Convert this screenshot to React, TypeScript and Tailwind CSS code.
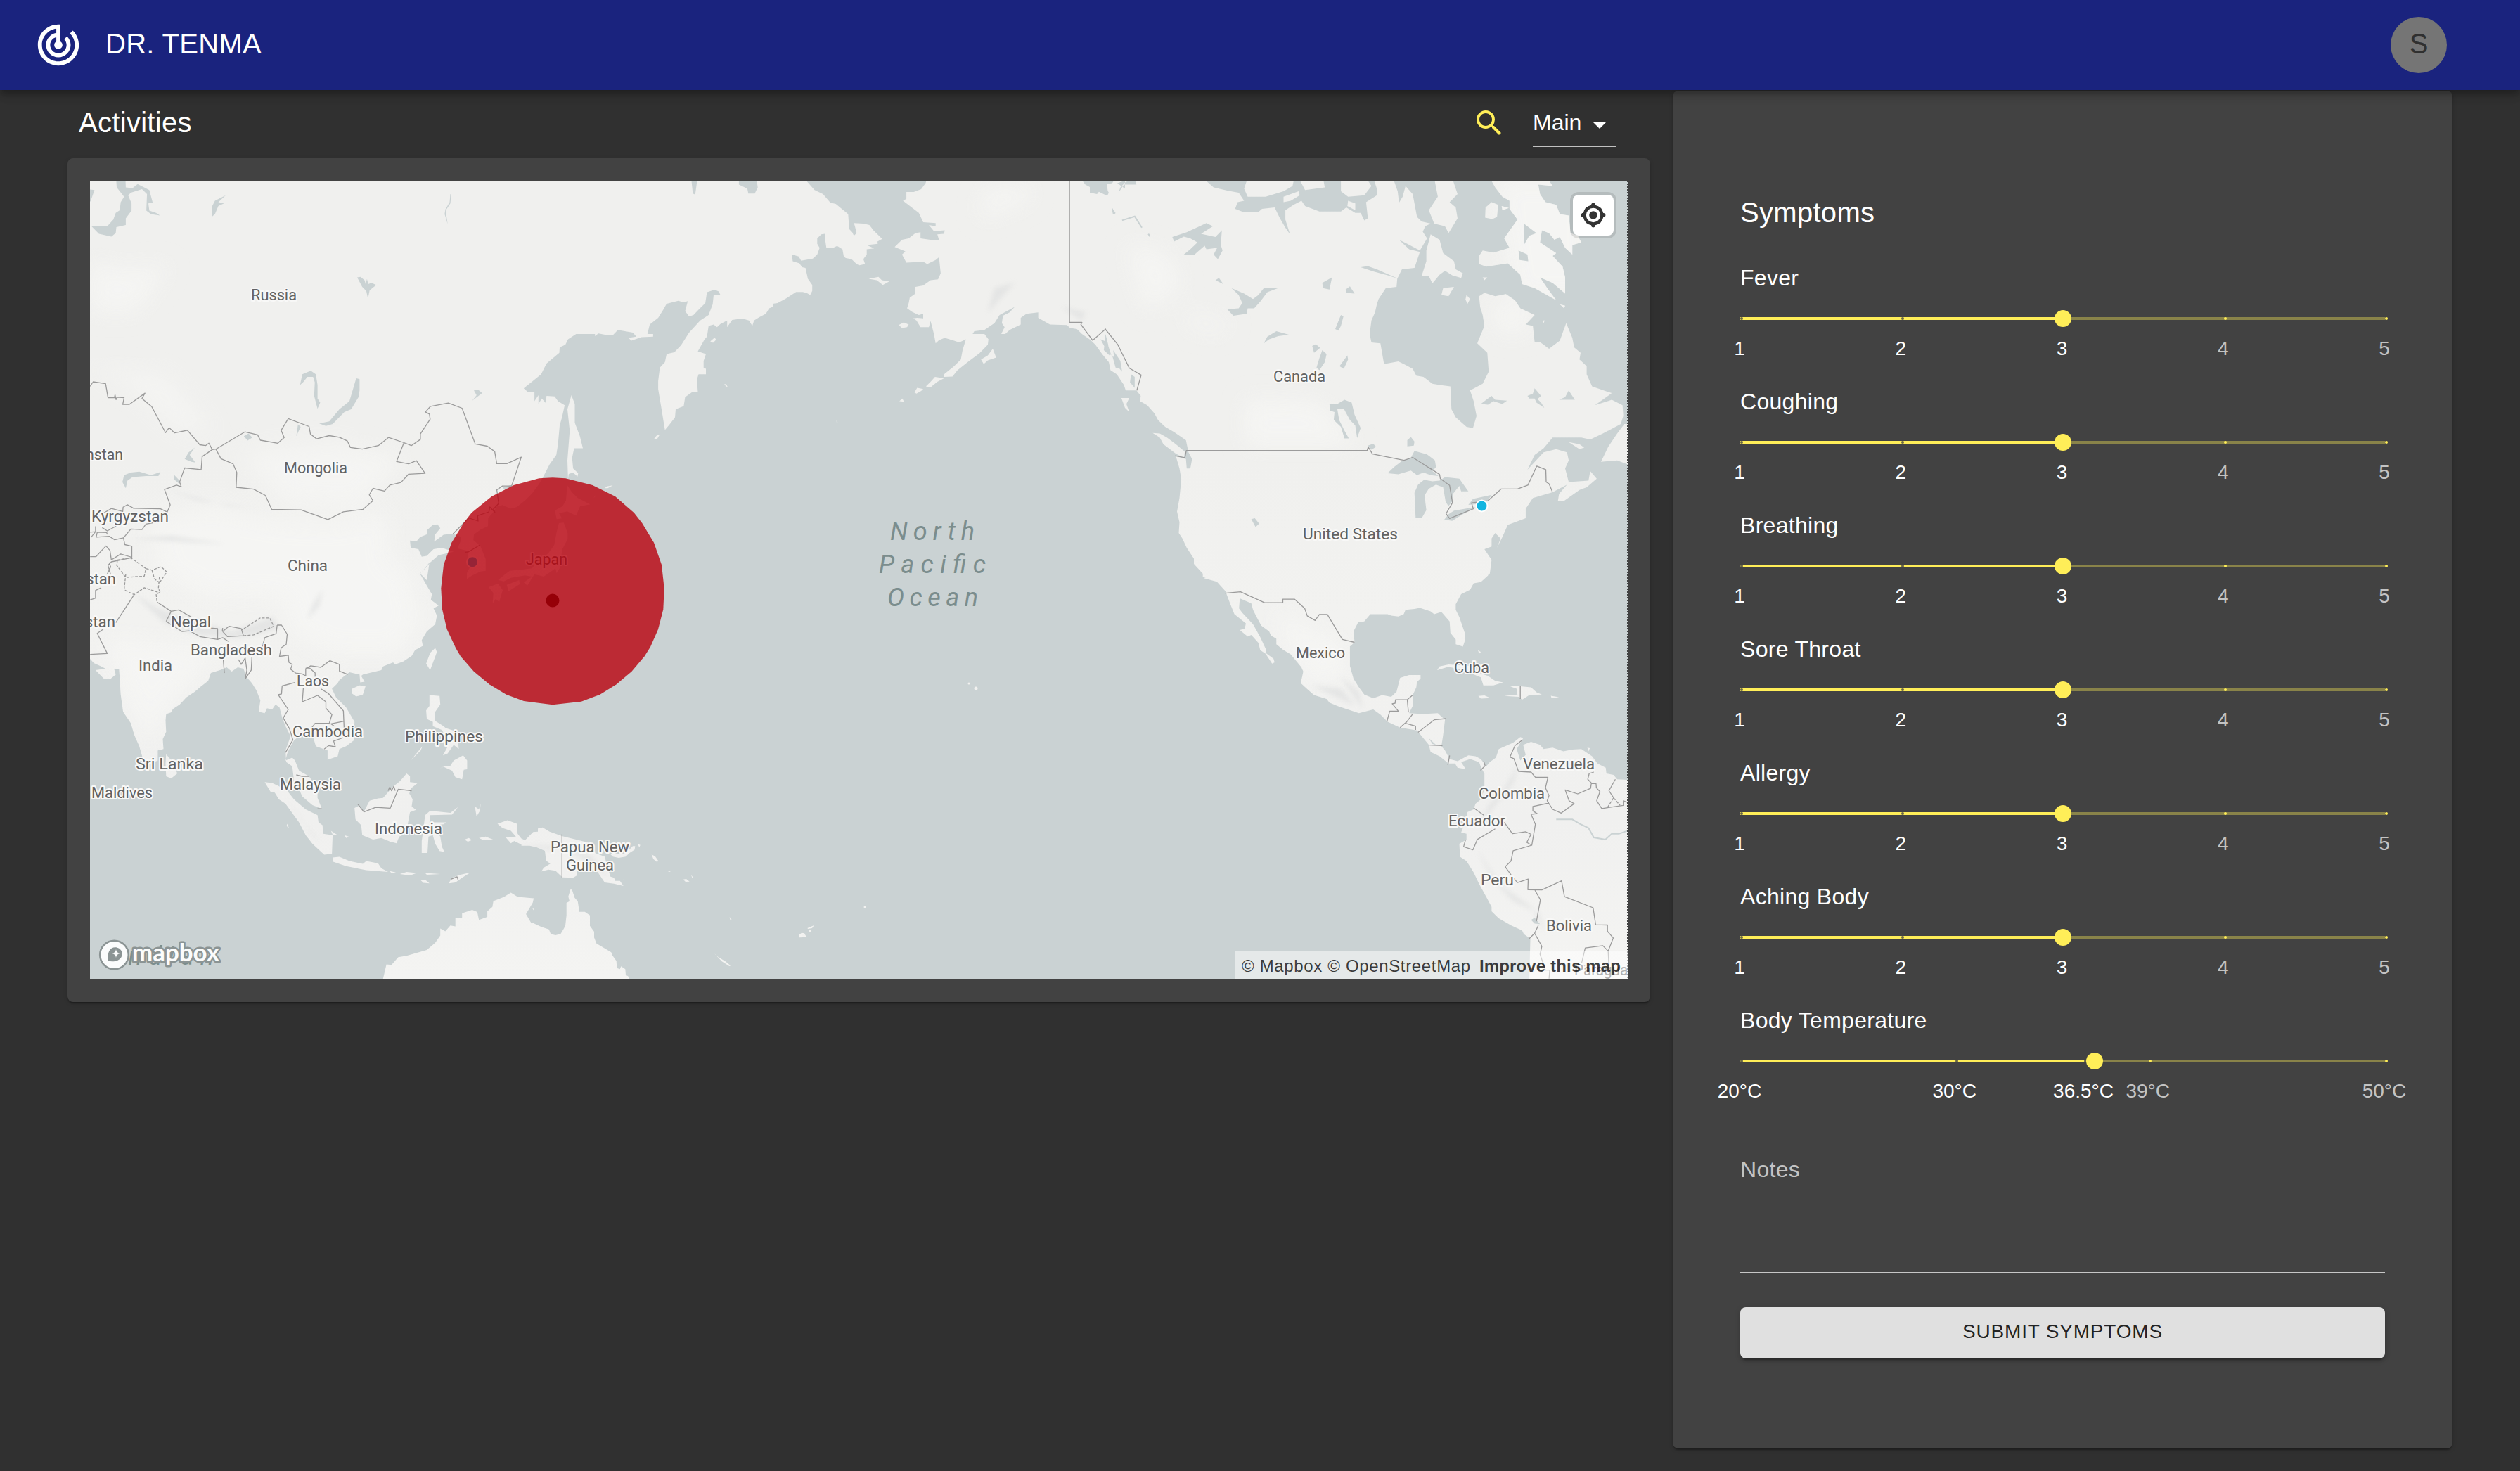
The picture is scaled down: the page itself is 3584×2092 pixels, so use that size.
import React from "react";
import { MdArrowDropDown, MdSearch, MdTrackChanges } from "react-icons/md";

/* ---------- Map data ----------
 * Coordinates are stored per sheet (origin x, origin y, scale x, scale y).
 * A letter switches the sheet, a slash starts a new ring.
 */
const SHEETS: Record<string, [number, number, number, number]> = {
  A: [100, 230, 0.47832, 0.38265],
  B: [850, 230, 0.47832, 0.38265],
  C: [1550, 230, 0.5102, 0.38265],
  D: [100, 800, 0.47832, 0.40816],
  E: [1550, 800, 0.5102, 0.40816],
  F: [600, 640, 0.33333, 0.33333],
  G: [740, 1120, 0.33333, 0.33333],
};

function toPath(source: string, close = true): string {
  let sheet = SHEETS.A;
  let out = "";
  let start = true;
  for (const token of source.trim().split(/\s+/)) {
    if (token === "/") {
      if (close) out += "Z";
      start = true;
    } else if (SHEETS[token]) {
      sheet = SHEETS[token];
    } else {
      const [x, y] = token.split(",").map(Number);
      const px = (sheet[0] + x * sheet[2]).toFixed(1);
      const py = (sheet[1] + y * sheet[3]).toFixed(1);
      out += (start ? "M" : "L") + px + " " + py;
      start = false;
    }
  }
  return close ? out + "Z" : out;
}

const EURASIA = `A 50,60 B 615,60 620,70 645,105 670,120 692,152 708,157 745,195 748,250 757,262 762,275 770,265 765,240 762,228 790,230 808,235 820,255 846,287 832,297 833,305 800,310 822,322 800,325 800,345 790,362 795,380 778,385 770,380 755,362 738,358 732,353 728,325 712,313 700,320 680,320 676,285 676,268 665,270 653,285 653,305 660,320 653,345 640,360 605,368 598,352 578,345 580,370 600,378 608,392 618,395 625,435 638,458 638,480 632,495 622,488 610,484 590,484 560,508 535,525 523,527 520,540 510,545 500,565 480,578 465,590 460,610 450,590 430,583 400,588 385,615 385,590 365,603 355,615 345,605 330,610 325,650 318,660 298,705 322,715 315,740 315,765 322,770 322,790 300,790 295,810 298,855 280,857 260,875 256,908 232,920 230,950 215,975 200,997 190,920 180,845 180,815 185,765 200,745 205,715 228,708 248,682 272,635 305,590 330,570 342,530 345,495 365,495 360,482 348,476 325,485 320,525 300,550 285,570 272,575 260,555 268,518 255,523 240,517 205,528 195,550 180,580 155,605 148,640 165,640 165,650 130,652 100,665 92,655 115,650 105,635 60,625 45,645 30,645 0,638
 A 1568,640 1560,648 1560,640 1504,640 1480,660 1472,680 1455,690 1454,710 1416,750 1400,790 1375,815 1348,842 1360,855 1380,857 1380,890 1392,868 1392,900 1402,880 1414,897 1416,870 1440,872 1450,890 1470,905 1462,950 1455,980 1450,1050 1445,1090 1425,1125 1404,1176
 F 515,118 500,145 470,185 440,215 405,243 380,250 355,240 345,235 320,240 305,265 283,290 282,325 250,340 222,360 220,385 250,410 262,440 272,465 272,515 250,518 215,535 192,550 192,525 205,500 197,460 195,430 152,420 165,390 165,370 133,358
 A 1140,1382 1110,1386 1082,1412 1085,1385 1100,1362 1092,1348 1078,1350 1060,1370 1060,1385 1040,1395 1030,1410 1010,1408 1012,1435 1035,1440 1045,1468 1060,1465 1080,1440 1105,1435 1140,1450 1095,1462 1070,1490 1060,1505 1040,1530 1060,1555
 D 1068,0 1040,40 1060,80 1075,110 1072,130 1095,150 1080,160 1090,185 1085,215 1060,240 1045,270 1048,290 1025,305 1015,325 990,345 965,355 960,348 930,362 925,375 870,390 865,395 875,415 862,418 860,390 830,382 810,400 800,410 795,420 778,440 790,470 820,505 845,555 843,620 820,640 800,650 795,675 765,687 765,655 730,640 720,600 715,590 690,595 665,620 655,640 645,665 640,690 660,680 668,690 680,725 710,745 735,790 735,820 748,858 720,845 690,815 680,790 665,760 660,710 642,695 640,655 655,605 640,570 630,540 622,505 610,495 600,512 585,508 578,525 560,520 565,480 553,445 540,420 525,400 515,370 498,365 480,380 465,365 445,375 418,385 410,412 385,435 370,450 345,470 325,495 305,510 300,522 285,528 283,550 285,590 275,615 277,650 260,655 260,690 240,700 215,680 205,640 190,600 180,560 157,520 150,460 145,370 130,370 135,390 120,405 100,405 75,375 105,370 92,362 70,350 62,340 50,325`;

const ISLANDS_WEST = `A 1490,868 1500,900 1500,970 1515,1020 1524,1065 1498,1065 1492,1100 1495,1140 1510,1158 1508,1170 1495,1155 1482,1160 1480,1180 1478,1110 1485,1000 1478,920 /
 F 620,150 640,180 665,205 718,232 675,240 658,280 620,262 585,270 598,292 575,295 568,258 600,240 615,215 /
 F 585,312 605,310 622,355 622,380 598,425 590,500 575,525 570,505 520,540 500,535 480,530 450,578 435,565 470,540 440,535 380,545 350,560 325,555 355,530 375,515 430,510 470,505 490,480 540,440 565,405 575,350 /
 F 362,575 415,555 418,572 370,602 / F 285,585 325,570 345,598 330,648 315,635 302,655 305,610 / F 732,205 742,193 738,200 / F 780,162 812,152 795,160 /
 D 578,765 600,768 618,778 645,795 665,825 700,860 735,880 738,905 750,915 752,945 780,950 778,1015 755,1018 720,980 700,950 680,905 655,865 640,840 620,825 608,802 595,798 / D 780,1028 800,1025 830,1040 870,1050 880,1040 915,1048 925,1065 945,1078 880,1072 820,1058 780,1042 /
 D 950,1075 968,1080 955,1083 / D 980,1085 1000,1078 1030,1082 1010,1090 / D 1055,1082 1100,1085 1060,1088 / D 1125,1118 1135,1098 1160,1088 1190,1080 1165,1098 1145,1115 / D 1040,1105 1055,1105 1068,1118 1050,1116 /
 D 845,855 858,848 873,868 890,830 915,822 930,820 960,780 980,762 1000,735 1010,745 1010,765 1033,768 1012,788 1008,805 1018,825 1015,850 1028,862 1010,870 1002,920 998,945 978,955 970,978 950,972 925,960 900,965 868,950 865,915 848,895 /
 D 1055,880 1070,865 1130,872 1153,852 1135,878 1070,880 1068,905 1118,905 1110,912 1085,915 1085,930 1100,955 1105,990 1112,1008 1098,1005 1085,980 1078,950 1065,955 1062,1012 1045,1012 1045,970 1050,930 /
 D 1203,850 1215,860 1220,840 1218,865 1208,885 / D 1215,960 1235,955 1262,968 1225,965 / D 1172,965 1185,960 1194,967 1182,973 /
 D 838,440 860,428 878,430 870,460 850,467 836,455 / D 1085,298 1090,312 1070,375 1058,352 1070,315 / D 775,935 795,950 780,948 / D 815,950 828,955 820,960 / D 645,910 650,925 643,918 / D 618,855 628,868 /
 D 1068,462 1098,465 1100,495 1085,520 1085,552 1110,570 1130,592 1108,585 1078,570 1078,555 1060,545 1058,515 1068,500 / D 1100,570 1150,590 1155,650 1140,635 1122,665 1108,672 1125,635 1118,615 / D 1012,690 1047,640 1042,655 /
 D 1098,718 1115,708 1130,708 1140,690 1168,672 1180,690 1180,720 1170,722 1165,755 1145,748 1135,725 1110,712 / D 285,668 305,695 318,735 300,752 285,745 283,700 /
 D 1270,910 1300,898 1328,910 1330,945 1350,975 1345,985 1320,970 1310,978 1295,958 1325,955 1310,935 1285,925 /
 G 0,215 20,225 55,190 75,188 75,175 95,170 125,188 180,208 290,235 320,280 360,295 375,350 385,380 400,385 405,398 425,398 440,420 400,410 360,405 330,360 280,335 240,350 242,375 225,385 180,383 150,355 120,350 90,358 100,342 128,325 110,312 105,270 70,255 40,248 5,248 / G 385,285 440,285 465,265 480,250 490,250 488,265 465,280 450,295 420,300 395,295 / G 500,240 512,245 508,255 / G 440,392 446,393 443,397 / G 33,150 44,158 /
 G 560,286 575,293 590,315 580,316 568,305 / G 630,358 636,353 641,360 / G 695,392 708,390 722,401 705,402 / G 673,346 689,355 / G 729,373 738,385 733,384 / G 748,417 755,422 / G 828,708 845,724 875,742 897,760 892,762 860,742 / G 1188,630 1200,620 1212,622 1221,638 1190,640 / G 1225,600 1253,588 1245,600 1228,603 / G 893,552 902,565 896,566 / G 1466,507 1473,507 1473,513 1466,513 / G 52,516 60,518 58,525 /
 D 928,1460 940,1400 955,1402 975,1375 1000,1370 1060,1350 1085,1325 1100,1300 1100,1275 1115,1285 1130,1265 1145,1268 1145,1240 1165,1240 1165,1222 1195,1210 1210,1218 1215,1245 1240,1235 1240,1215 1255,1200 1258,1180 1290,1165 1310,1150 1330,1165 1378,1170 1375,1185 1355,1225 1370,1255
 G 55,578 90,595 122,605 130,625 150,630 172,625 182,608 192,590 197,545 197,492 210,485 205,465 215,432 222,440 232,470 245,485 252,530 275,530 297,545 297,590 315,615 315,640 325,665 388,703 392,715 410,740 412,770 425,775 430,763 448,775 450,800 460,805 472,830`;

const AMERICAS = `B 980,60 975,80 962,102 940,112 918,112 918,138 908,145 955,190 968,225 1005,228 1005,240 985,235 1000,258 1032,255 1030,268 1010,270 1015,290 1000,292 960,285 960,262 945,265 925,285 905,290 883,317 915,333 905,345 918,375 968,372 980,380 1005,365 1015,355 1020,415 1012,437 990,440 968,460 945,465 945,490 928,505 925,525 920,545 935,558 955,570 968,565 968,582 950,580 938,582 948,590 960,615 985,615 990,592 1000,640 1005,675 1015,663 1032,655 1060,665 1075,672 1095,660 1085,700 1080,735 1060,760 1030,790 1030,800 1055,798 1070,775 1100,745 1135,712 1160,680 1162,660 1150,640 1115,640 1120,630 1150,625 1180,600 1195,570 1240,540 1225,560 1205,572 1202,600 1210,615 1200,640 1212,640 1225,625 1258,605 1258,580 1275,565 1310,560 1310,580 1345,605 1395,607 1405,618 1425,622 1440,640 1465,662 1480,680 1500,715 1520,745 1525,775
 C 75,790 95,830 100,850 130,850 142,870 140,890 160,905 180,935 190,960 210,985 235,1005 268,1035 275,1080 285,1105 280,1140 270,1140 268,1105 240,1095 250,1140 255,1180 250,1250 243,1300 250,1340 248,1380 258,1400 270,1435 290,1475 290,1495 318,1535 318,1548 352,1560
 E 290,0 315,35 315,50 355,68 378,100 390,140 403,180 435,212 432,230 418,235 440,258 450,252 470,280 475,305 490,318 508,352 515,348 512,335 490,315 490,300 475,260 455,215 425,175 416,160 418,125 450,142 455,165 465,190 478,220 500,240 505,255 520,265 520,285 540,305 560,320 590,365 595,380 588,420 605,440 625,462 660,475 668,488 690,500 750,525 790,512 810,530 830,555 865,575 912,585 945,635 950,660 975,675 1000,700 1018,700 1025,715 1048,720 1035,695 1060,685 1085,695 1092,718 1100,735 1100,790 1090,825 1075,840 1070,860 1052,870 1050,895 1035,940 1050,945 1050,965 1030,980 1032,1025 1050,1040 1070,1080 1085,1120 1105,1165 1120,1200 1120,1215 1140,1240 1175,1265 1205,1282 1210,1295 1228,1310 1225,1460 1510,1460 1510,758 1470,755 1460,740 1440,735 1438,715 1415,700 1400,675 1370,650 1345,652 1320,658 1290,645 1265,650 1255,635 1230,625 1208,635 1215,670 1200,690 1190,650 1208,612 1200,608 1180,628 1140,650 1132,680 1115,695 1105,710 1090,685 1075,675 1055,672 1025,692 1003,685 990,655 980,640 985,600 990,548 970,525 930,528 890,525 900,500 900,462 910,435 912,415 922,405 922,392 890,392 865,402 860,425 855,450 840,468 815,462 790,473 765,460 750,435 735,405 725,360 725,292 738,278 735,240 748,208 765,205 782,180 830,180 840,185 860,188 875,180 880,165 905,162 920,158 950,170 960,180 980,172 1003,205 1005,245 1020,268 1020,285 1040,293 1046,270 1045,245 1030,190 1020,165 1020,145 1035,110 1060,95 1070,72 1090,68 1110,45 1118,0
 C 1090,1560 1115,1530 1120,1480 1100,1440 1120,1430 1120,1400 1130,1380 1145,1400 1135,1435 1150,1395 1165,1350 1215,1325 1215,1290 1235,1250 1290,1228 1330,1200 1308,1235 1305,1260 1320,1262 1365,1220 1385,1210 1413,1178 1395,1150 1390,1185 1335,1190 1325,1140 1335,1110 1330,1080 1300,1068 1265,1080 1220,1145 1240,1090 1265,1065 1290,1025 1370,1025 1395,1032 1430,1010 1480,975 1487,945 1485,905 1455,885 1408,905 1455,860 1400,835 1385,790 1385,760 1365,735 1368,710 1350,690 1345,655 1328,600 1310,665 1280,695 1255,670 1240,670 1235,610 1215,605 1240,570 1200,545 1185,515 1160,492 1130,500 1100,487 1085,500 1088,540 1095,570 1100,610 1080,675 1108,710 1112,780 1095,825 1060,850 1070,890 1078,945 1068,990 1050,985 1020,950 1008,920 1005,835 975,830 955,825 930,800 910,795 900,770 880,755 860,742 820,752 810,675 785,672 780,640 785,590 795,560 800,530 805,510 825,470 855,465 857,435 870,400 905,395 920,335 890,325 862,290 885,305 920,330 940,285 928,260 935,240 950,230 925,222 912,205 900,120 880,90 872,130 862,152 858,110 845,60 790,60 800,100 800,125 770,150 775,210 765,218 755,190 740,190 715,170 700,185 640,185 600,165 590,145 568,160 545,180 545,215 558,270 545,245 530,210 515,170 480,175 470,187 430,188 405,175 412,150 430,145 415,115 385,108 345,95 315,60 /
 C 960,60 970,130 945,180 960,230 990,240 1000,265 1025,210 1020,170 1003,150 1025,120 1010,60 / C 950,270 975,290 985,340 1015,370 1020,400 1040,415 1035,432 1010,422 990,405 975,420 955,452 945,425 925,425 938,370 938,330 /
 C 1115,60 1130,95 1150,130 1170,145 1170,175 1192,215 1155,285 1170,320 1125,338 1095,330 1085,350 1085,380 1105,390 1165,378 1200,420 1205,455 1240,470 1300,515 1275,470 1255,430 1290,450 1325,490 1325,430 1318,390 1290,350 1300,340 1255,300 1260,255 1280,265 1295,290 1310,280 1325,320 1345,345 1345,310 1370,300 1360,275 1340,265 1335,200 1310,195 1300,160 1270,150 1255,120 1250,85 1290,90 1275,60 /
 C 1120,150 1138,160 1135,205 1122,213 1102,208 1103,170 / C 1148,165 1168,172 1150,180 / C 985,470 1015,465 1000,500 980,495 / C 1050,495 1060,510 1053,528 1047,512 /
 C 440,60 430,100 440,130 490,130 540,110 565,90 570,60 / C 582,60 590,80 600,105 655,95 650,60 / C 700,60 700,110 720,130 765,125 785,90 770,60 / C 540,130 582,110 585,125 560,145 540,150 / C 720,145 740,155 740,180 718,165 /
 C 1490,975 1470,1010 1445,1060 1425,1115 1470,1110 1500,1125 1500,975 / C 1335,1042 1365,1050 1378,1062 1365,1068 / C 1310,530 1325,535 1322,545 / C 1262,590 1268,590 1265,600 / C 1095,430 1108,430 1100,440 /
 E 968,375 975,362 1000,355 1060,360 1085,385 1110,395 1130,412 1152,418 1125,428 1097,428 1090,400 1040,375 1000,363 / E 1172,432 1190,430 1230,435 1245,452 1260,460 1225,462 1205,478 1195,468 1155,465 1192,460 1190,440 / E 1083,465 1100,463 1117,472 1090,474 / E 1285,464 1308,469 1287,472 / E 1082,305 1090,312 1085,318 / E 842,886 850,908 / E 1387,645 1394,647 1390,658 /
 C 175,1008 195,1010 215,1025 240,1050 265,1078 262,1100 240,1085 205,1050 195,1025 / C 88,878 110,878 102,900 110,930 98,915 / B 1140,735 1160,720 1175,695 1185,728 1160,738 1148,752 / B 806,435 835,428 845,440 867,445 848,458 830,440 / B 895,607 910,597 925,605 920,615 905,618 / B 942,858 950,840 968,845 962,852 948,862 / B 976,835 990,818 1003,800 1030,805 1010,818 990,838 / B 897,890 906,880 911,892 / B 866,917 874,905 / B 870,910 894,905 / B 168,1028 176,1017 184,1015 176,1032 / B 20,1213 30,1206 45,1203 30,1213 / B 335,668 348,653 352,662 343,673 / B 376,828 382,826 388,841 / B 503,923 515,927 / B 685,968 691,970 / B 710,962 714,970 711,972`;

const WATER = `A 136,60 164,60 165,95 185,98 200,83 235,105 245,152 232,155 235,182 255,190 267,200 240,195 226,182 228,120 213,102 180,115 172,125 182,155 182,182 165,210 165,235 137,243 135,265 122,278 85,268 63,240 110,240 128,215 135,190 147,180 150,150 160,130 138,95 / A 50,102 72,105 60,148 50,148 / A 462,125 440,150 457,155 440,165 430,195 422,203 422,165 430,145 /
 A 1130,120 1133,121 1130,155 1116,182 1122,232 1113,195 1115,178 1128,150 / A 853,430 863,428 875,440 878,455 882,436 886,455 895,450 910,458 898,470 890,478 885,508 880,480 868,465 / A 683,830 690,790 715,777 730,790 735,830 735,880 743,895 735,918 725,870 727,820 722,800 705,800 692,820 /
 A 850,805 860,808 860,850 857,875 835,920 815,930 780,975 760,982 740,973 770,965 800,920 830,890 / A 1200,850 1212,847 1225,860 1195,888 1208,868 / A 677,976 685,985 672,1020 / A 516,1020 530,1010 541,1025 527,1036 /
 A 155,1190 160,1165 180,1155 205,1152 240,1165 268,1153 262,1168 225,1168 185,1172 170,1185 165,1213 / A 340,1105 352,1080 370,1062 355,1090 372,1118 360,1115 / A 308,1163 325,1185 325,1198 308,1180 /
 B 278,60 297,60 290,122 283,118 / B 420,60 420,85 445,100 448,118 467,118 476,95 472,60 / B 1435,60 1450,85 1480,105 1515,127 1520,115 1505,85 1530,80 1540,60 / B 1545,80 1568,70 1568,100 / C 0,60 0,115 20,120 35,95 50,110 48,85 70,60 / C 80,115 95,85 130,85 125,65 100,75 85,95 / B 1528,170 1540,190 1532,195 / B 1555,770 1540,765 1530,720 1545,740 / B 1510,640 1518,680 1522,720 1505,700 / C 115,790 125,800 125,840 112,820 / C 30,660 48,670 60,720 48,705 / C 65,700 85,740 90,780 70,750 /
 C 230,280 270,262 325,228 343,240 310,268 350,280 368,255 365,310 370,330 357,362 345,345 355,320 325,325 320,312 300,335 292,345 262,345 280,325 300,300 280,285 262,278 235,297 / C 395,470 430,490 455,510 470,495 485,470 525,470 495,485 475,520 458,545 440,545 437,565 400,572 383,548 415,545 425,525 415,495 /
 C 485,675 495,650 520,630 555,643 525,648 500,660 / C 648,700 660,715 655,745 640,775 632,765 640,730 / C 620,685 630,678 642,692 625,710 / C 648,450 675,430 668,475 650,470 / C 713,475 725,463 738,490 715,487 / C 700,570 707,575 700,610 693,628 684,622 692,595 / C 718,720 720,735 708,770 696,760 / C 62,170 72,195 65,195 / C 350,440 360,432 372,455 /
 C 668,900 690,900 710,885 730,895 738,940 755,990 745,1027 740,980 725,960 708,918 690,920 695,960 710,1000 722,1028 710,1028 700,985 680,960 682,930 670,925 / C 885,1035 895,1023 905,1040 903,1055 885,1058 / C 775,1055 790,1048 798,1060 785,1070 / C 830,1158 848,1135 870,1112 895,1100 905,1075 940,1088 962,1110 965,1135 955,1150 972,1168 950,1165 930,1155 912,1165 895,1148 860,1162 / C 905,1230 915,1200 932,1182 955,1188 975,1185 990,1172 1030,1178 1055,1225 1035,1225 1030,1205 1012,1235 1010,1262 1000,1280 992,1265 985,1210 965,1200 945,1215 933,1240 938,1295 925,1325 908,1322 / C 988,1330 1000,1310 1015,1297 1075,1283 1040,1310 1010,1335 / C 1055,1275 1068,1253 1120,1238 1108,1262 1080,1272 / C 450,1328 460,1325 472,1345 462,1358 /
 C 1090,900 1105,885 1120,870 1130,885 1163,888 1150,900 1125,890 1110,903 / C 1220,870 1235,862 1240,842 1258,870 1248,882 1258,895 1267,915 1245,895 1240,880 1225,880 / C 1308,885 1325,875 1335,850 1352,885 / C 755,392 775,388 800,400 860,435 830,422 790,408 / C 965,230 985,262 975,270 955,255 / C 1210,230 1245,265 1225,275 1210,310 / C 1195,330 1220,345 1222,370 1198,365 /
 E 1230,1245 1240,1238 1255,1260 1240,1258 / E 945,612 965,635 955,632 / F 345,160 380,150 385,158 355,170`;

const RIVERS = `E 1300,895 1345,895 1365,910 1390,925 1405,958 1437,965 1455,945 1475,945 1498,935 / C 90,218 125,203 145,245 / C 163,268 168,278`;

const BORDERS = `A 59,835 68,818 105,825 112,877 131,877 133,866 136,884 139,875 160,877 156,902 175,902 222,860 213,880 242,910 283,1007 294,988 310,1008 348,998 385,1052 402,1055 412,1046 422,1070 433,1068 519,1004 557,1015 565,1035 617,1046 636,1025 627,998 648,955 710,984 714,1012 732,1030 770,1018 800,1024 824,1038 833,1062 868,1068 916,1055 946,1025 992,1044 1014,1055 1041,1032 1041,1012 1070,957 1068,938 1056,930 1071,909 1124,897 1165,916 1204,1049 1240,1057 1262,1077 1268,1122 1298,1122 1341,1098 1312,1205 1285,1205 1268,1220 F 320,172 328,228 305,252 312,266 290,243 286,264 238,280 240,303 200,290 133,358 /
 A 433,1068 448,1104 484,1123 495,1155 493,1210 545,1217 580,1240 599,1292 686,1294 766,1330 812,1301 870,1292 900,1260 889,1238 900,1214 934,1224 950,1202 983,1192 1006,1161 1055,1158 1029,1111 1006,1123 970,1114 992,1044 /
 A 422,1070 392,1096 389,1144 340,1138 325,1190 330,1208 316,1202 280,1218 297,1275 288,1302 268,1290 188,1288 170,1275 157,1284 156,1300 122,1289 100,1305 / A 59,1377 75,1375 62,1395 / A 75,1355 75,1375 / A 95,1360 110,1372 140,1352 130,1340 / A 245,1342 225,1347 213,1367 180,1365 158,1398 132,1405 116,1392 77,1395 80,1377 108,1378 110,1385 / A 158,1398 162,1423 183,1429 183,1470 150,1458 122,1480 118,1445 106,1428 76,1468 59,1468 / A 180,1472 122,1487 112,1500 120,1535 / D 115,0 120,15 110,40 / D 92,88 75,97 75,124 59,130 /
 D 190,112 135,210 / D 98,232 80,247 110,317 59,320 / D 258,138 300,170 322,165 360,190 / D 285,205 300,170 / D 285,205 332,240 355,238 385,258 438,268 438,230 415,228 / D 453,240 472,222 508,230 515,255 467,258 453,240 / D 438,268 453,262 470,275 / D 453,228 452,240 / D 615,218 628,218 645,250 642,285 627,297 622,327 648,323 650,348 660,355 655,372 670,385 690,388 / D 615,218 612,248 578,262 570,300 / D 455,340 458,385 / D 500,338 508,355 520,333 525,375 520,405 538,375 540,330 /
 D 668,418 630,430 628,458 618,460 648,512 633,542 652,580 662,618 640,662 / D 693,435 690,485 735,463 760,485 760,508 778,530 770,560 728,560 715,580 / D 745,440 768,457 812,517 814,575 / D 814,553 775,562 785,570 / D 690,388 700,395 700,370 715,360 745,365 772,342 800,355 800,378 825,390 / D 700,368 712,368 728,385 728,398 / D 755,650 768,638 788,642 783,622 812,610 / D 672,740 690,745 710,745 / D 735,858 748,858 / D 855,842 873,869 908,853 951,856 975,790 1015,795 / D 945,795 950,782 955,795 962,780 966,795 / D 1462,947 1462,1097 / D 1133,1103 1150,1095 1153,1105 / F 185,436 198,435 248,405 /
 E 377,107 420,102 487,140 538,140 538,128 571,128 599,160 606,186 628,202 640,181 662,181 704,268 738,278 / E 828,555 836,518 860,518 843,492 851,490 852,478 885,478 888,522 / E 885,478 900,462 / E 900,528 880,560 908,570 908,583 / E 880,558 865,575 / E 915,592 960,548 993,544 / E 947,636 983,638 / E 1003,672 998,705 / E 1098,692 1102,708 1089,724 /
 E 1206,618 1185,638 1171,678 1182,683 1195,728 1230,730 1242,748 1277,748 1270,785 1280,812 1275,830 1290,860 1314,873 1350,840 1336,830 1325,792 1360,806 1396,787 1398,768 1388,755 1392,735 1405,730 / E 1398,770 1411,770 1412,785 1422,798 1413,830 1427,857 1487,846 1487,830 1498,835 / E 1465,755 1447,795 1460,820 / E 1280,838 1235,850 1235,865 1247,875 1230,877 1242,912 1232,985 1218,975 1230,947 1215,938 1178,945 1155,905 / E 1232,985 1180,1004 1174,1040 1158,1060 1178,1095 1192,1115 1222,1103 1221,1140 1260,1141 1315,1109 1323,1164 1403,1203 1410,1262 1443,1263 1443,1285 1459,1308 1445,1354 1430,1335 1381,1343 1370,1400 1430,1440 /
 E 1240,1140 1256,1175 1245,1250 / E 1225,1310 1240,1292 1250,1265 / E 1240,1292 1260,1337 1255,1365 1270,1420 1282,1420 1280,1450 / E 1445,1354 1447,1410 / E 1070,855 1098,880 / E 1130,928 1080,965 1068,1001 1042,990 1047,967 / E 1200,430 1200,475 /
 B 1403,60 1403,597 1440,597 1437,605 1472,664 1510,622 C 43,622 78,680 110,767 143,793 131,850 / C 238,1093 265,1100 269,1073 773,1073 776,1060 788,1086 876,1110 900,1099 975,1162 977,1178 1003,1203 1011,1267 993,1308 1003,1326 1069,1290 1064,1268 1110,1260 1147,1216 1192,1216 1221,1202 1246,1131 1271,1144 1272,1190 1280,1197 1289,1225`;

const DISPUTED = `A 140,1480 180,1472 225,1512 220,1540 165,1545 138,1500 140,1480 / A 225,1512 243,1518 270,1505 287,1525 265,1565 / A 243,1518 250,1550 265,1565 / D 165,40 160,95 190,112 220,88 265,105 255,110 258,138 / D 265,50 262,90 268,105 / D 515,255 545,252 605,222 593,193 565,193 510,235 / E 1460,820 1443,853 / E 1460,820 1478,846`;

const OUTBREAK = `F 558,118 613,121 728,150 825,198 905,268 940,312 990,395 1023,490 1034,590 1030,680 1008,765 975,840 950,880 895,945 830,1000 760,1043 680,1073 558,1087 435,1071 360,1043 288,1000 222,945 165,880 145,845 107,765 87,680 82,590 93,490 127,395 178,312 212,268 298,198 392,150 500,121`;

// Soft relief: lighter lowlands and slightly darker ranges
const RELIEF_LIGHT = `A 59,360 150,400 300,380 200,560 59,560 / A 59,760 280,800 420,1000 330,1000 200,850 / A 220,1330 420,1280 620,1330 780,1340 950,1300 950,1560 300,1560 / A 500,1080 780,1050 1000,1100 860,1280 640,1270 / D 200,0 1000,0 1040,200 980,320 780,320 650,250 640,130 400,120 / D 100,260 440,300 300,500 230,640 170,480 / C 100,300 220,340 260,470 150,560 / C 430,880 640,890 750,1060 430,1060 / C 1120,510 1220,540 1230,640 1130,640 / E 500,160 700,280 720,400 620,430 / B 1150,100 1300,90 1280,150 1130,220 / C 280,560 400,600 360,640 260,610 / C 1130,60 1400,60 1400,520 1180,520`;
const RELIEF_DARK = `A 290,1220 470,1280 560,1290 380,1260 / A 190,1400 300,1390 460,1420 300,1410 / D 190,110 260,160 310,180 480,240 600,190 620,230 500,262 380,252 280,210 / D 750,95 740,150 705,200 720,150 / D 640,820 680,880 720,950 740,970 690,900 / D 1330,985 1440,988 1430,1000 / E 620,430 700,440 740,500 690,470 / E 700,400 750,450 760,510 / E 1195,700 1180,770 1120,860 1090,920 1110,850 1160,780 / E 1080,1000 1120,1100 1180,1180 1250,1220 1270,1290 1230,1200 1140,1120 / B 1180,470 1240,450 1160,560 / B 1380,540 1450,560 1440,590 / G 190,260 300,290 380,390 310,330`;

type Label = [text: string, x: number, y: number, width: number];

const COUNTRIES: Label[] = [
  ["Russia", 357, 427, 65],
  ["Mongolia", 404, 673, 90],
  ["Kazakhstan", 64, 654, 111],
  ["Kyrgyzstan", 130, 742, 110],
  ["China", 409, 812, 57],
  ["Japan", 748, 803, 59],
  ["Tajikistan", 71, 831, 94],
  ["Pakistan", 78, 892, 86],
  ["Nepal", 243, 892, 57],
  ["Bangladesh", 271, 932, 116],
  ["India", 197, 954, 48],
  ["Laos", 422, 976, 46],
  ["Cambodia", 416, 1048, 100],
  ["Philippines", 576, 1055, 111],
  ["Sri Lanka", 193, 1094, 96],
  ["Malaysia", 398, 1123, 87],
  ["Maldives", 130, 1135, 87],
  ["Indonesia", 533, 1186, 96],
  ["Papua New", 783, 1212, 112],
  ["Guinea", 805, 1238, 68],
  ["Canada", 1811, 543, 74],
  ["United States", 1853, 767, 135],
  ["Mexico", 1843, 936, 70],
  ["Cuba", 2068, 957, 50],
  ["Venezuela", 2166, 1094, 102],
  ["Colombia", 2103, 1136, 94],
  ["Ecuador", 2060, 1175, 81],
  ["Peru", 2106, 1259, 47],
  ["Bolivia", 2199, 1324, 65],
  ["Paraguay", 2239, 1387, 86],
];

const OCEANS: Label[] = [
  ["North", 1266, 768, 120],
  ["Pacific", 1250, 815, 152],
  ["Ocean", 1262, 862, 129],
  ["Indian", 164, 1372, 140],
];

function WorldMap() {
  return (
    <div className="relative h-[1136px] w-[2187px] overflow-hidden bg-[#cad2d3]">
      <svg className="block h-full w-full" viewBox="128 257 2187 1136" aria-label="World map">
        <defs>
          <linearGradient id="land" gradientUnits="userSpaceOnUse" x1="0" y1="257" x2="0" y2="1393">
            <stop offset="0" stopColor="#f0f0ee" />
            <stop offset="0.35" stopColor="#f0f0ee" />
            <stop offset="0.55" stopColor="#f2f2f0" />
            <stop offset="0.8" stopColor="#f0f0ef" />
            <stop offset="1" stopColor="#f4f4f2" />
          </linearGradient>
          <filter id="relief" x="-5%" y="-5%" width="110%" height="110%">
            <feGaussianBlur stdDeviation="16" />
          </filter>
          <filter id="ridge" x="-5%" y="-5%" width="110%" height="110%">
            <feGaussianBlur stdDeviation="3" />
          </filter>
          <clipPath id="shore">
            <path d={toPath(EURASIA)} />
            <path d={toPath(ISLANDS_WEST)} />
            <path d={toPath(AMERICAS)} />
          </clipPath>
        </defs>
        <g fill="url(#land)">
          <path d={toPath(EURASIA)} />
          <path d={toPath(ISLANDS_WEST)} />
          <path d={toPath(AMERICAS)} />
        </g>
        <g clipPath="url(#shore)">
          <path d={toPath(RELIEF_LIGHT)} fill="#f7f7f5" opacity="0.7" filter="url(#relief)" />
          <path d={toPath(RELIEF_DARK)} fill="#dfe0e0" opacity="0.7" filter="url(#ridge)" />
        </g>
        <path d={toPath(WATER)} fill="#cad2d3" />
        <path d={toPath(RIVERS, false)} fill="none" stroke="#cad2d3" strokeWidth="2" />
        <g fill="#f1f1ef">
          <circle cx="1378" cy="972" r="1.5" />
          <circle cx="1388" cy="979" r="2.5" />
          <circle cx="1143" cy="1330" r="2" />
          <circle cx="1152" cy="1324" r="1.5" />
        </g>
        <g fill="none" stroke="#9b9b9b" strokeWidth="1.3" strokeLinejoin="round">
          <path d={toPath(BORDERS, false)} />
          <path d={toPath(DISPUTED, false)} strokeDasharray="4 2" />
        </g>
        <g fontFamily="Roboto, sans-serif" fontStyle="italic" fontSize="36" fontWeight="400" fill="#7b8d8d">
          {OCEANS.map(([text, x, y, width]) => (
            <text key={text} x={x} y={y} textLength={width}>
              {text}
            </text>
          ))}
        </g>
        <g
          fontFamily="Roboto, sans-serif"
          fontSize="22"
          fontWeight="400"
          fill="#626262"
          stroke="#f8f8f7"
          strokeWidth="4"
          strokeLinejoin="round"
          paintOrder="stroke"
        >
          {COUNTRIES.map(([text, x, y, width]) => (
            <text key={text} x={x} y={y} textLength={width} lengthAdjust="spacingAndGlyphs">
              {text}
            </text>
          ))}
        </g>
        <circle cx="672" cy="799.3" r="8" fill="#12b5e0" stroke="#f7f7f6" strokeWidth="2" />
        <circle cx="2107.5" cy="719.5" r="8" fill="#12b5e0" stroke="#ffffff" strokeWidth="2" />
        <path d={toPath(OUTBREAK)} fill="#b8000c" fillOpacity="0.8" />
        <circle cx="786" cy="854" r="9.5" fill="#960008" />
        <path d="M2314.5 257V1393" stroke="#424242" strokeDasharray="2 2" />

        <g>
          <circle cx="162.5" cy="1358" r="20.3" fill="#fbfcfc" stroke="#8b9494" strokeWidth="2.6" />
          <path
            d="M154 1366.8C152.600 1356 155 1351 159 1348.500C164 1345.500 171 1348 173 1353C175 1359 172 1364 167 1366C163 1367.600 158 1367.300 154 1366.800Z"
            fill="#8b9494"
          />
          <path d="M165 1350q0.600 5.200 5.600 6q-5 0.800-5.600 6q-0.600-5.200-5.600-6q5-0.800 5.600-6z" fill="#fbfcfc" />
          <text
            x="188"
            y="1367"
            textLength="124"
            lengthAdjust="spacingAndGlyphs"
            fontFamily="Lato, sans-serif"
            fontWeight="700"
            fontSize="35"
            fill="#fbfcfc"
            stroke="#8b9494"
            strokeWidth="5"
            strokeLinejoin="round"
            paintOrder="stroke"
          >
            mapbox
          </text>
        </g>
      </svg>

      <button className="absolute top-5 right-5 size-[58px] rounded-lg bg-white shadow-[0_0_0_4px_rgba(0,0,0,0.1)]">
        <svg viewBox="0 0 20 20" className="size-[58px]" fill="#333333">
          <path
            fillRule="evenodd"
            d="M10 4C9 4 9 5 9 5v.1A5 5 0 0 0 5.100 9H5s-1 0-1 1 1 1 1 1h.1A5 5 0 0 0 9 14.900v.1s0 1 1 1 1-1 1-1v-.1a5 5 0 0 0 3.900-3.900h.1s1 0 1-1-1-1-1-1h-.1A5 5 0 0 0 11 5.100V5s0-1-1-1zm0 2.500a3.500 3.500 0 1 1 0 7 3.500 3.500 0 1 1 0-7z"
          />
          <circle cx="10" cy="10" r="2" />
        </svg>
      </button>

      <div className="absolute right-0 bottom-0 flex h-10 w-[559px] items-center justify-between bg-white/50 pt-0.5 pr-[10px] pl-[10px] text-[24px] leading-[38px] whitespace-nowrap text-black/75">
        <span className="tracking-[0.65px]">© Mapbox © OpenStreetMap</span>
        <span className="font-bold tracking-[0.15px]">Improve this map</span>
      </div>
    </div>
  );
}

/* ---------- Symptom form ---------- */

type Mark = { at: number; label: string };

const LEVELS: Mark[] = [1, 2, 3, 4, 5].map((n) => ({ at: (n - 1) * 25, label: String(n) }));
const TEMPERATURES: Mark[] = [
  { at: 0, label: "20°C" },
  { at: 33.333, label: "30°C" },
  { at: 53.333, label: "36.5°C" },
  { at: 63.333, label: "39°C" },
  { at: 100, label: "50°C" },
];

function SymptomSlider({ title, marks, value }: { title: string; marks: Mark[]; value: number }) {
  return (
    <div className="h-[176px]">
      <div className="pt-px text-[32px] leading-[48px] tracking-[0.3px]">{title}</div>
      <div className="relative mt-8 h-1 bg-[#ffee58]/38">
        <div className="h-1 bg-[#ffee58]" style={{ width: `${value}%` }} />
        {marks.map((mark) => (
          <React.Fragment key={mark.label}>
            <span
              className={`absolute top-0 size-1 rounded-full ${mark.at <= value ? "bg-[#424242]/80" : "bg-[#ffee58]"}`}
              style={{ left: `${mark.at}%` }}
            />
            <span
              className={`absolute top-[25px] -ml-px -translate-x-1/2 text-[28px] leading-[40px] whitespace-nowrap ${
                mark.at <= value ? "text-white" : "text-white/70"
              }`}
              style={{ left: `${mark.at}%` }}
            >
              {mark.label}
            </span>
          </React.Fragment>
        ))}
        <span
          className="absolute -top-[10px] -ml-3 size-6 rounded-full bg-[#ffee58]"
          style={{ left: `${value}%` }}
        />
      </div>
    </div>
  );
}

const SYMPTOMS = ["Fever", "Coughing", "Breathing", "Sore Throat", "Allergy", "Aching Body"];

export default function App() {
  return (
    <div className="h-[2092px] w-[3584px] overflow-hidden bg-[#303030] font-['Liberation_Sans',Arial,sans-serif] text-white">
      <header className="relative z-10 flex h-32 items-center justify-between bg-[#1a237e] pr-[104px] pl-12 shadow-[0_4px_8px_-2px_rgba(0,0,0,0.2),0_8px_10px_0_rgba(0,0,0,0.14),0_2px_20px_0_rgba(0,0,0,0.12)]">
        <div className="flex items-center">
          <MdTrackChanges className="size-[70px]" />
          <h1 className="ml-8 -mt-[5px] text-[40px] leading-[64px] tracking-[0.3px]">DR. TENMA</h1>
        </div>
        <div className="flex size-20 items-center justify-center rounded-full bg-[#757575] text-[40px] text-[#303030]">
          <span className="-mt-1">S</span>
        </div>
      </header>

      <main className="flex items-start pl-24">
        <section className="w-[2251px]">
          <div className="flex h-[97px] items-start justify-between pr-12 pl-4">
            <h2 className="mt-[14px] text-[40px] leading-[64px] tracking-[0.3px]">Activities</h2>
            <div className="mt-[22px] flex items-start">
              <MdSearch className="mt-px size-12 text-[#ffee58]" />
              <div className="ml-[38px] flex h-[59px] w-[119px] items-start border-b-2 border-white/70">
                <span className="w-[71px] text-[32px] leading-[48px]">Main</span>
                <MdArrowDropDown className="mt-[3px] size-12 shrink-0" />
              </div>
            </div>
          </div>
          <div className="h-[1200px] rounded-lg bg-[#424242] p-8 shadow-[0_4px_2px_-2px_rgba(0,0,0,0.2),0_2px_2px_0_rgba(0,0,0,0.14),0_2px_6px_0_rgba(0,0,0,0.12)]">
            <WorldMap />
          </div>
        </section>

        <aside className="mt-px ml-8 h-[1931px] w-[1109px] rounded-lg bg-[#424242] px-24 pt-[141px] shadow-[0_4px_2px_-2px_rgba(0,0,0,0.2),0_2px_2px_0_rgba(0,0,0,0.14),0_2px_6px_0_rgba(0,0,0,0.12)]">
          <h2 className="mb-9 text-[40px] leading-[64px] tracking-[0.3px]">Symptoms</h2>
          {SYMPTOMS.map((name) => (
            <SymptomSlider key={name} title={name} marks={LEVELS} value={50} />
          ))}
          <SymptomSlider title="Body Temperature" marks={TEMPERATURES} value={55} />
          <div className="mt-[37px] h-[172px] border-b-2 border-white/70 text-[32px] leading-[48px] tracking-[0.3px] text-white/70">
            Notes
          </div>
          <button className="mt-12 block h-[73px] w-full rounded-lg bg-[#e0e0e0] pb-1 text-[28px] leading-[48px] tracking-[0.8px] text-black/87 shadow-[0_6px_2px_-4px_rgba(0,0,0,0.2),0_4px_4px_0_rgba(0,0,0,0.14),0_2px_10px_0_rgba(0,0,0,0.12)]">
            SUBMIT SYMPTOMS
          </button>
        </aside>
      </main>
    </div>
  );
}
